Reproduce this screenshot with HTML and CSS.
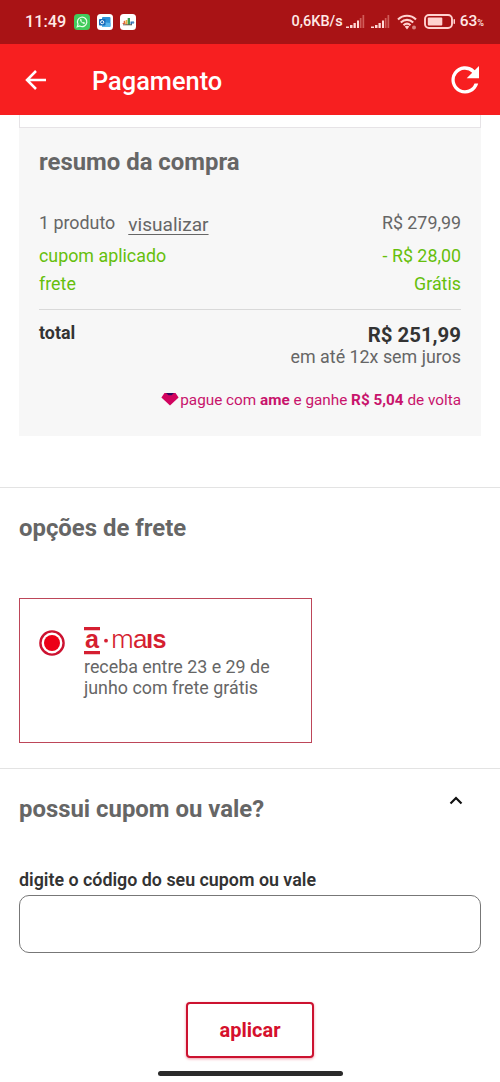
FILE: index.html
```html
<!DOCTYPE html>
<html lang="pt-BR">
<head>
<meta charset="utf-8">
<title>Pagamento</title>
<link rel="stylesheet" href="styles.css">
</head>
<body>
<div class="status">
  <span class="clock">11:49</span>
  <svg class="app" viewBox="0 0 16 16"><rect width="16" height="16" rx="3.5" fill="#42cb5c"/><path d="M3.2 12.8l.8-2.7a4.7 4.7 0 1 1 1.9 1.9z" fill="none" stroke="#e8ffea" stroke-width="1.2"/><path d="M6.2 5.2c-1 1.2 2.5 5.3 4.4 4.6l.5-1-1.5-.9-.8.6c-.6-.3-1.2-.9-1.5-1.5l.5-.7-.7-1.3z" fill="#e8ffea"/></svg>
  <svg class="app" viewBox="0 0 16 16"><rect width="16" height="16" rx="3.5" fill="#fff"/><rect x="5" y="3" width="8.5" height="10" rx="1" fill="#2b92d8"/><path d="M5 8l8.5 1v3a1 1 0 0 1-1 1H5z" fill="#58b6ec"/><rect x="2" y="5" width="6.5" height="6.5" rx=".8" fill="#176ab8"/><circle cx="5.2" cy="8.2" r="1.6" fill="none" stroke="#fff" stroke-width="1"/></svg>
  <svg class="app" viewBox="0 0 16 16"><rect width="16" height="16" rx="3.5" fill="#fff"/><path d="M2 10h3v-2z" fill="#d64835"/><path d="M3.5 7.5l1.5-1 .7 3.500H4z" fill="#e06c3c"/><rect x="5.700" y="6" width="1.700" height="5" fill="#e7b23d"/><rect x="7.700" y="4" width="2.300" height="7" fill="#3f9b52"/><path d="M10.500 7.500h1.500V11h-1.500z" fill="#356fb5"/><circle cx="13" cy="8.500" r="1.200" fill="#4f87be"/><path d="M3 10.800h9" stroke="#6b5a52"/></svg>
  <span class="spacer"></span>
  <span class="speed">0,6KB/s</span>
  <svg class="signal" viewBox="0 0 19 14"><path d="M0 11.500h3V13H0zM4 10h2.500v3H4zM7.500 8h2.300v5H7.500zM11 5.500h2V13h-2z" fill="#ffd9d6"/><path d="M13.800 3h1.700v10h-1.700zM16.500 0h1.700v13h-1.700z" fill="#d05c59"/></svg>
  <svg class="signal second" viewBox="0 0 19 14"><path d="M0 11.500h3V13H0zM4 10h2.500v3H4zM7.500 8h2.300v5H7.500zM11 5.500h2V13h-2z" fill="#ffd9d6"/><path d="M13.800 3h1.700v10h-1.700zM16.500 0h1.700v13h-1.700z" fill="#d05c59"/></svg>
  <svg class="wifi" viewBox="0 0 20 16"><g fill="none" stroke="#ffd2cf" stroke-width="2.100"><path d="M1 5.500c5-5 13-5 18 0M3.800 8.500c3.600-3.500 8.800-3.500 12.400 0M6.500 11.300c2.100-2 4.900-2 7 0"/></g><path d="M7.700 12.500L10 15.500l2.300-3c-1.300-1-3.300-1-4.600 0z" fill="#ffd2cf"/><circle cx="17" cy="13.500" r="2" fill="#d98480"/></svg>
  <svg class="battery" viewBox="0 0 32 16"><rect x="1" y="1" width="27" height="13" rx="4" fill="none" stroke="#ffd2cf" stroke-width="1.900"/><rect x="3.800" y="3.500" width="14.500" height="8" rx="1" fill="#ffd2cf"/><rect x="29.500" y="5" width="1.500" height="5" rx=".7" fill="#ffd2cf"/></svg>
  <span class="level">63<small>%</small></span>
</div>
<header class="bar">
  <svg class="back" viewBox="0 0 22 20"><path d="M11 1L2 10l9 9M2 10h19" fill="none" stroke="#fff" stroke-width="2.500"/></svg>
  <h1>Pagamento</h1>
  <svg class="reload" viewBox="0 0 28 28"><path d="M23.700 4.300A13.600 13.600 0 1 0 27.200 17.400h-3.700A10.200 10.200 0 1 1 21.200 6.800L15.700 12.300H28V0z" fill="#fff"/></svg>
</header>
<main>
  <div class="previous"></div>
  <section class="summary">
    <h2>resumo da compra</h2>
    <div class="row product"><span>1 produto</span><a class="view">visualizar</a><span class="end">R$ 279,99</span></div>
    <div class="row green coupon"><span>cupom aplicado</span><span class="end">- R$ 28,00</span></div>
    <div class="row green shipping"><span>frete</span><span class="end">Grátis</span></div>
    <div class="row total"><strong>total</strong><strong class="end price">R$ 251,99</strong></div>
    <p class="terms">em até 12x sem juros</p>
    <p class="ame"><svg class="gem" viewBox="0 0 18 13"><path d="M3.500 0h11L17.600 4.500 9 12.500.400 4.500z" fill="#d1045f"/><path d="M5 0h8L10.500 2.300h-3z" fill="#35085f"/></svg><span>pague com <b>ame</b> e ganhe <b>R$ 5,04</b> de volta</span></p>
  </section>
  <section class="delivery">
    <h2>opções de frete</h2>
    <div class="option">
      <svg class="radio" viewBox="0 0 26 26"><circle cx="13" cy="13" r="11.600" fill="#fff" stroke="#cc1230" stroke-width="2.400"/><circle cx="13" cy="13" r="8" fill="#ec0017"/></svg>
      <div class="detail">
        <svg class="brand" viewBox="0 0 84 29" fill="#d51f31"><path d="M0 0h16v3.300H0zM0 24h16v3.300H0z"/><circle cx="22" cy="13.700" r="1.900"/><text class="bold" x="1" y="20.500" textLength="14" lengthAdjust="spacingAndGlyphs">a</text><text class="thin" x="27" y="20.500" textLength="23" lengthAdjust="spacingAndGlyphs">m</text><text class="regular" x="49" y="20.500">a</text><text class="bold" x="62" y="20.500">ı</text><text class="bold" x="68.500" y="20.500" textLength="14" lengthAdjust="spacingAndGlyphs">s</text></svg>
        <p>receba entre 23 e 29 de<br>junho com frete grátis</p>
      </div>
    </div>
  </section>
  <section class="voucher">
    <div class="voucher-head"><h2>possui cupom ou vale?</h2><svg class="chevron" viewBox="0 0 14 9"><path d="M1.500 7.500L7 2l5.500 5.500" fill="none" stroke="#111" stroke-width="2.200"/></svg></div>
    <label for="code">digite o código do seu cupom ou vale</label>
    <input id="code" class="code" type="text">
    <button class="apply">aplicar</button>
  </section>
  <div class="home"></div>
</main>
</body>
</html>
```
FILE: styles.css
```css
* { box-sizing: border-box; }
body { margin: 0; width: 500px; height: 1082px; overflow: hidden; background: #fff; color: #666; font: 17.850px/22px Roboto, sans-serif; }
h1, h2, p { margin: 0; }
svg { display: block; flex: none; }
.status { height: 44px; background: #a91315; color: #ffe9e6; display: flex; align-items: center; padding: 0 16px 0 25px; }
.clock { width: 49px; font-size: 16.300px; font-weight: 500; }
.app { width: 16px; height: 16px; margin-right: 7px; }
.spacer { flex: 1; }
.speed { font-size: 14.500px; font-weight: 500; margin-right: 3px; }
.signal { width: 19px; height: 14px; }
.signal.second { margin-left: 6px; }
.wifi { width: 20px; height: 16px; margin-left: 7px; }
.battery { width: 32px; height: 16px; margin: 0 4px 0 7px; }
.level { font-size: 15.500px; font-weight: 500; }
.level small { font-size: 9px; }
.bar { height: 71px; background: #f71f20; color: #fff; display: flex; align-items: center; padding: 0 21px 0 25px; }
.back { width: 22px; height: 20px; }
.bar h1 { flex: 1; margin-left: 45px; font-size: 25.400px; font-weight: 500; line-height: 30px; padding-top: 3px; }
.reload { width: 28px; height: 28px; }
.previous { height: 13px; margin: 0 19px; border: solid #e6e3e6; border-width: 0 1px 1px; }
.summary { height: 308px; margin: 0 19px; padding: 19px 20px 0; background: #f7f7f7; }
h2 { font-size: 23.900px; line-height: 30px; font-weight: 700; }
.row { display: flex; align-items: baseline; }
.end { margin-left: auto; }
.product { margin-top: 35px; height: 33px; }
.view { margin-left: 13px; position: relative; top: 2px; font-size: 19.100px; text-decoration: underline; text-underline-offset: 3px; }
.green { color: #66bf0c; }
.coupon { height: 28px; }
.shipping { height: 36px; }
.total { align-items: flex-start; border-top: 1px solid #d9d9d9; height: 37px; padding-top: 12px; color: #333; }
.total .price { font-size: 20.400px; padding-top: 2px; }
.terms { text-align: right; }
.ame { display: flex; justify-content: flex-end; align-items: center; margin-top: 21px; font-size: 15.300px; color: #c8146c; }
.gem { width: 18px; height: 13px; margin: 0 1.500px 2px 0; }
.delivery { margin-top: 51px; border-top: 1px solid #e3e3e3; padding: 25px 19px 0; height: 281px; }
.option { width: 293px; height: 145px; margin-top: 55px; border: 1px solid #bd4659; padding: 28px 19px; display: flex; }
.radio { width: 26px; height: 26px; margin-top: 3px; }
.detail { margin-left: 19px; }
.brand { width: 84px; height: 29px; overflow: visible; }
.brand text { font-family: "Liberation Sans", sans-serif; font-size: 26px; }
.brand .thin { font-family: Inter, sans-serif; font-weight: 300; font-size: 25px; }
.brand .bold { font-weight: 700; }
.detail p { line-height: 21px; white-space: nowrap; margin-top: -.500px; }
.voucher { border-top: 1px solid #e3e3e3; padding: 25px 19px 0; display: flex; flex-direction: column; }
.voucher-head { display: flex; justify-content: space-between; padding-right: 18px; }
.chevron { width: 14px; height: 9px; margin-top: 2px; }
.voucher label { margin-top: 45px; height: 26px; font-size: 17.850px; font-weight: 600; color: #333; }
.code { height: 58px; border: 1px solid #777; border-radius: 10px; background: #fff; padding: 0 16px; font: inherit; }
.apply { align-self: center; width: 128px; height: 56px; margin-top: 49px; border: 2px solid #cc1230; border-radius: 4px; background: #fff; color: #d5102c; font: 700 20px Roboto, sans-serif; box-shadow: 0 1px 3px #f09aa7; }
.home { width: 185px; height: 5px; margin: 13px auto 0; border-radius: 3px; background: #2b2b2b; }
```
